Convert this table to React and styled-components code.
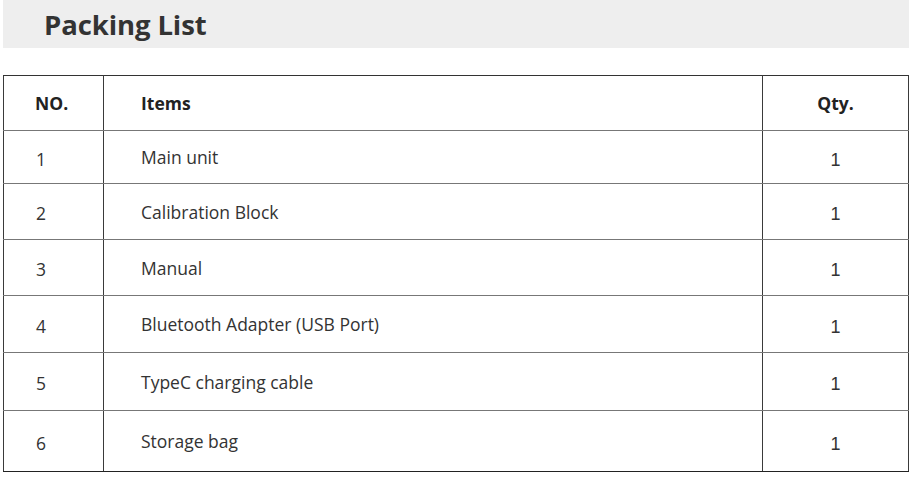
import React from "react";
import styled, { createGlobalStyle } from "styled-components";

const Global = createGlobalStyle`
  html, body { margin: 0; padding: 0; background: #fff; }
  body { font-family: "Open Sans", "Noto Sans", sans-serif; color: #333; }
`;

const Page = styled.div`
  width: 913px;
  height: 484px;
  padding: 0 0 0 3px;
  box-sizing: border-box;
  display: flex;
  flex-direction: column;
  gap: 27px;
`;

const TitleBar = styled.div`
  width: 906px;
  height: 48px;
  background: #eeeeee;
  display: flex;
  align-items: center;
  padding-left: 41px;
  box-sizing: border-box;
`;

const Title = styled.h1`
  margin: 0;
  font-family: "Open Sans", sans-serif;
  font-weight: 700;
  font-size: 27.5px;
  color: #333;
  letter-spacing: -0.1px;
`;

const Table = styled.table`
  border-collapse: collapse;
  width: 905px;
  table-layout: fixed;
`;

const Row = styled.tr`
  height: ${(p) => p.$h}px;
`;

const Cell = styled.td`
  border-left: 1px solid #3a3a3a;
  border-right: 1px solid #3a3a3a;
  border-top: 1px solid #777;
  border-bottom: 1px solid #777;
  padding: 0;
  padding-top: ${(p) => p.$dy || 0}px;
  font-family: ${(p) => (p.$arial ? '"Liberation Sans", Arial, sans-serif' : '"Open Sans", sans-serif')};
  font-size: ${(p) => (p.$arial ? 18 : 17.5)}px;
  font-weight: ${(p) => (p.$head ? 700 : 400)};
  color: ${(p) => (p.$head ? "#222" : "#333")};
  text-align: ${(p) => (p.$center ? "center" : "left")};
  padding-left: ${(p) => p.$pl || 0}px;
  vertical-align: middle;
  box-sizing: border-box;
  white-space: nowrap;
`;

const HeadRow = styled(Row)`
  & > td { border-top: 1px solid #333; }
`;

const LastRow = styled(Row)`
  & > td { border-bottom: 1px solid #222; }
`;

const items = [
  { no: 1, name: "Main unit", qty: 1, h: 53 },
  { no: 2, name: "Calibration Block", qty: 1, h: 56 },
  { no: 3, name: "Manual", qty: 1, h: 56 },
  { no: 4, name: "Bluetooth Adapter (USB Port)", qty: 1, h: 57 },
  { no: 5, name: "TypeC charging cable", qty: 1, h: 58 },
  { no: 6, name: "Storage bag", qty: 1, h: 61 },
];

export default function App() {
  return (
    <>
      <Global />
      <Page>
        <TitleBar>
          <Title>Packing List</Title>
        </TitleBar>
        <Table>
          <colgroup>
            <col style={{ width: 100 }} />
            <col style={{ width: 659 }} />
            <col style={{ width: 146 }} />
          </colgroup>
          <tbody>
            <HeadRow $h={55}>
              <Cell $head $pl={31}>NO.</Cell>
              <Cell $head $pl={37}>Items</Cell>
              <Cell $head $center>Qty.</Cell>
            </HeadRow>
            {items.map((it, i) => {
              const R = i === items.length - 1 ? LastRow : Row;
              return (
                <R key={it.no} $h={it.h}>
                  <Cell $pl={32} $dy={3}>{it.no}</Cell>
                  <Cell $pl={37} $dy={-2}>{it.name}</Cell>
                  <Cell $arial $center $dy={6}>{it.qty}</Cell>
                </R>
              );
            })}
          </tbody>
        </Table>
      </Page>
    </>
  );
}
